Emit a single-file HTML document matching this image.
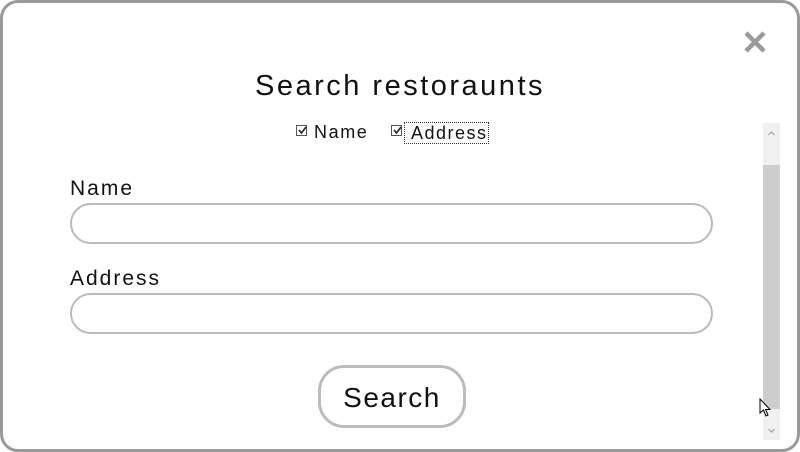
<!DOCTYPE html>
<html><head><meta charset="utf-8"><style>
*{margin:0;padding:0;box-sizing:border-box}
body{width:800px;height:450px;background:#fff;font-family:"Liberation Sans","DejaVu Sans",sans-serif;color:#111;position:relative;overflow:hidden}
.frame{position:absolute;left:0;top:0;width:800px;height:452px;border:3px solid #9a9a9a;border-radius:18px}
.close{position:absolute;left:743px;top:30px;width:24px;height:24px}
h1{position:absolute;left:0;width:800px;top:70px;text-align:center;font-weight:normal;font-size:29px;letter-spacing:2.5px}
.cb{position:absolute;top:122px;font-size:18px;letter-spacing:1.6px}
.box{position:absolute;width:11px;height:11px;border:1px solid #555;top:125px}
.lbl{position:absolute;left:70px;font-size:21px;letter-spacing:2px}
.inp{position:absolute;left:70px;width:643px;height:41px;border:2px solid #bbb;border-radius:21px}
.btn{position:absolute;left:318px;top:365px;width:148px;height:63px;border:3px solid #bbb;border-radius:26px;font-size:28px;text-align:center;line-height:59px;letter-spacing:1.5px}
.track{position:absolute;left:763px;top:123px;width:17px;height:317px;background:#f0f0f0}
.thumb{position:absolute;left:763px;top:165px;width:17px;height:244px;background:#cdcdcd}
</style></head><body>
<div class="frame"></div>
<svg class="close" viewBox="0 0 24 24"><path d="M3 3L21 21M21 3L3 21" stroke="#9a9a9a" stroke-width="4.5"/></svg>
<h1>Search restoraunts</h1>
<div class="box" style="left:296px"></div>
<svg style="position:absolute;left:297px;top:125px" width="11" height="11"><path d="M2 5L4.5 8L9 2" stroke="#222" stroke-width="1.6" fill="none"/></svg>
<div class="cb" style="left:314px">Name</div>
<div class="box" style="left:391px"></div>
<svg style="position:absolute;left:392px;top:125px" width="11" height="11"><path d="M2 5L4.5 8L9 2" stroke="#222" stroke-width="1.6" fill="none"/></svg>
<div class="cb" style="left:404px;border:1px dotted #333;padding:0 0 0 6px;line-height:20px;letter-spacing:1.5px">Address</div>
<div class="lbl" style="top:177px">Name</div>
<div class="inp" style="top:203px"></div>
<div class="lbl" style="top:267px">Address</div>
<div class="inp" style="top:293px"></div>
<div class="btn">Search</div>
<div class="track"></div>
<div class="thumb"></div>
<svg style="position:absolute;left:763px;top:126px" width="17" height="14"><path d="M5.5 9L8.5 6L11.5 9" stroke="#999" fill="none"/></svg>
<svg style="position:absolute;left:763px;top:424px" width="17" height="14"><path d="M5.5 5L8.5 8L11.5 5" stroke="#999" fill="none"/></svg>
<svg style="position:absolute;left:759px;top:398px" width="14" height="20"><path d="M1 1L1 15L4.5 12L7 18L9 17L6.5 11.5L11 11.5Z" fill="#fff" stroke="#000" stroke-width="1"/></svg>
</body></html>
